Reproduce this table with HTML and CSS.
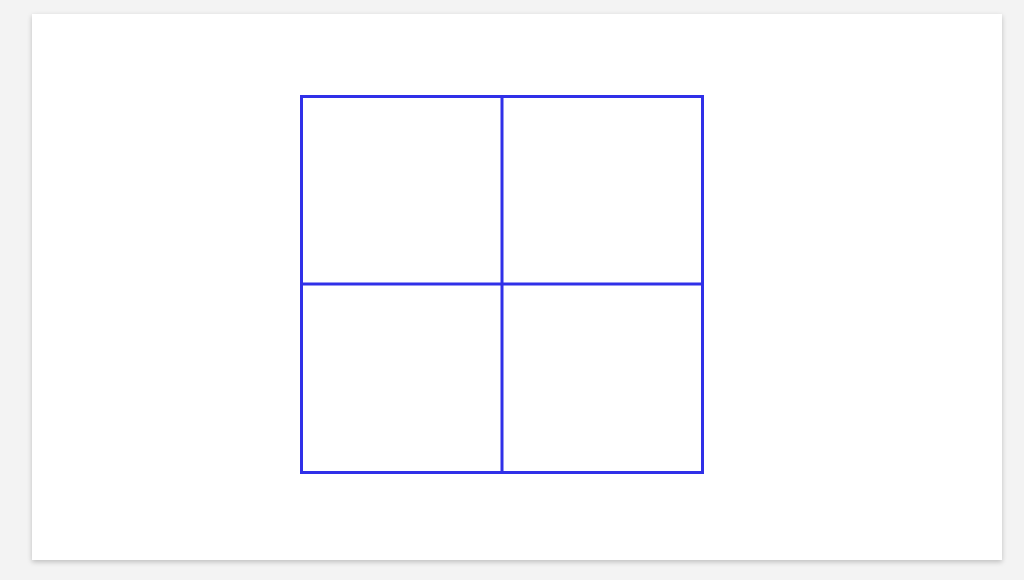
FILE: index.html
```html
<!DOCTYPE html>
<html>
<head>
<meta charset="utf-8">
<link rel="stylesheet" href="styles.css">
</head>
<body>
<div class="card">
  <svg class="grid" width="970" height="546" viewBox="0 0 970 546">
    <g stroke="#3030e8" stroke-width="3" fill="none" stroke-linecap="square">
      <rect x="269.5" y="82.5" width="401" height="376"/>
      <line x1="470" y1="82.5" x2="470" y2="458.5"/>
      <line x1="269.5" y1="270" x2="670.5" y2="270"/>
    </g>
  </svg>
</div>
</body>
</html>
```

FILE: styles.css
```css
html, body {
  margin: 0;
  padding: 0;
  background: #f3f3f3;
  font-family: "Liberation Sans", Arial, sans-serif;
}
body {
  width: 1024px;
  height: 580px;
  overflow: hidden;
}
.card {
  margin: 14px 0 0 32px;
  width: 970px;
  height: 546px;
  background: #ffffff;
  box-shadow: 0 2px 5px rgba(0, 0, 0, 0.22);
}
.grid {
  display: block;
}
```
